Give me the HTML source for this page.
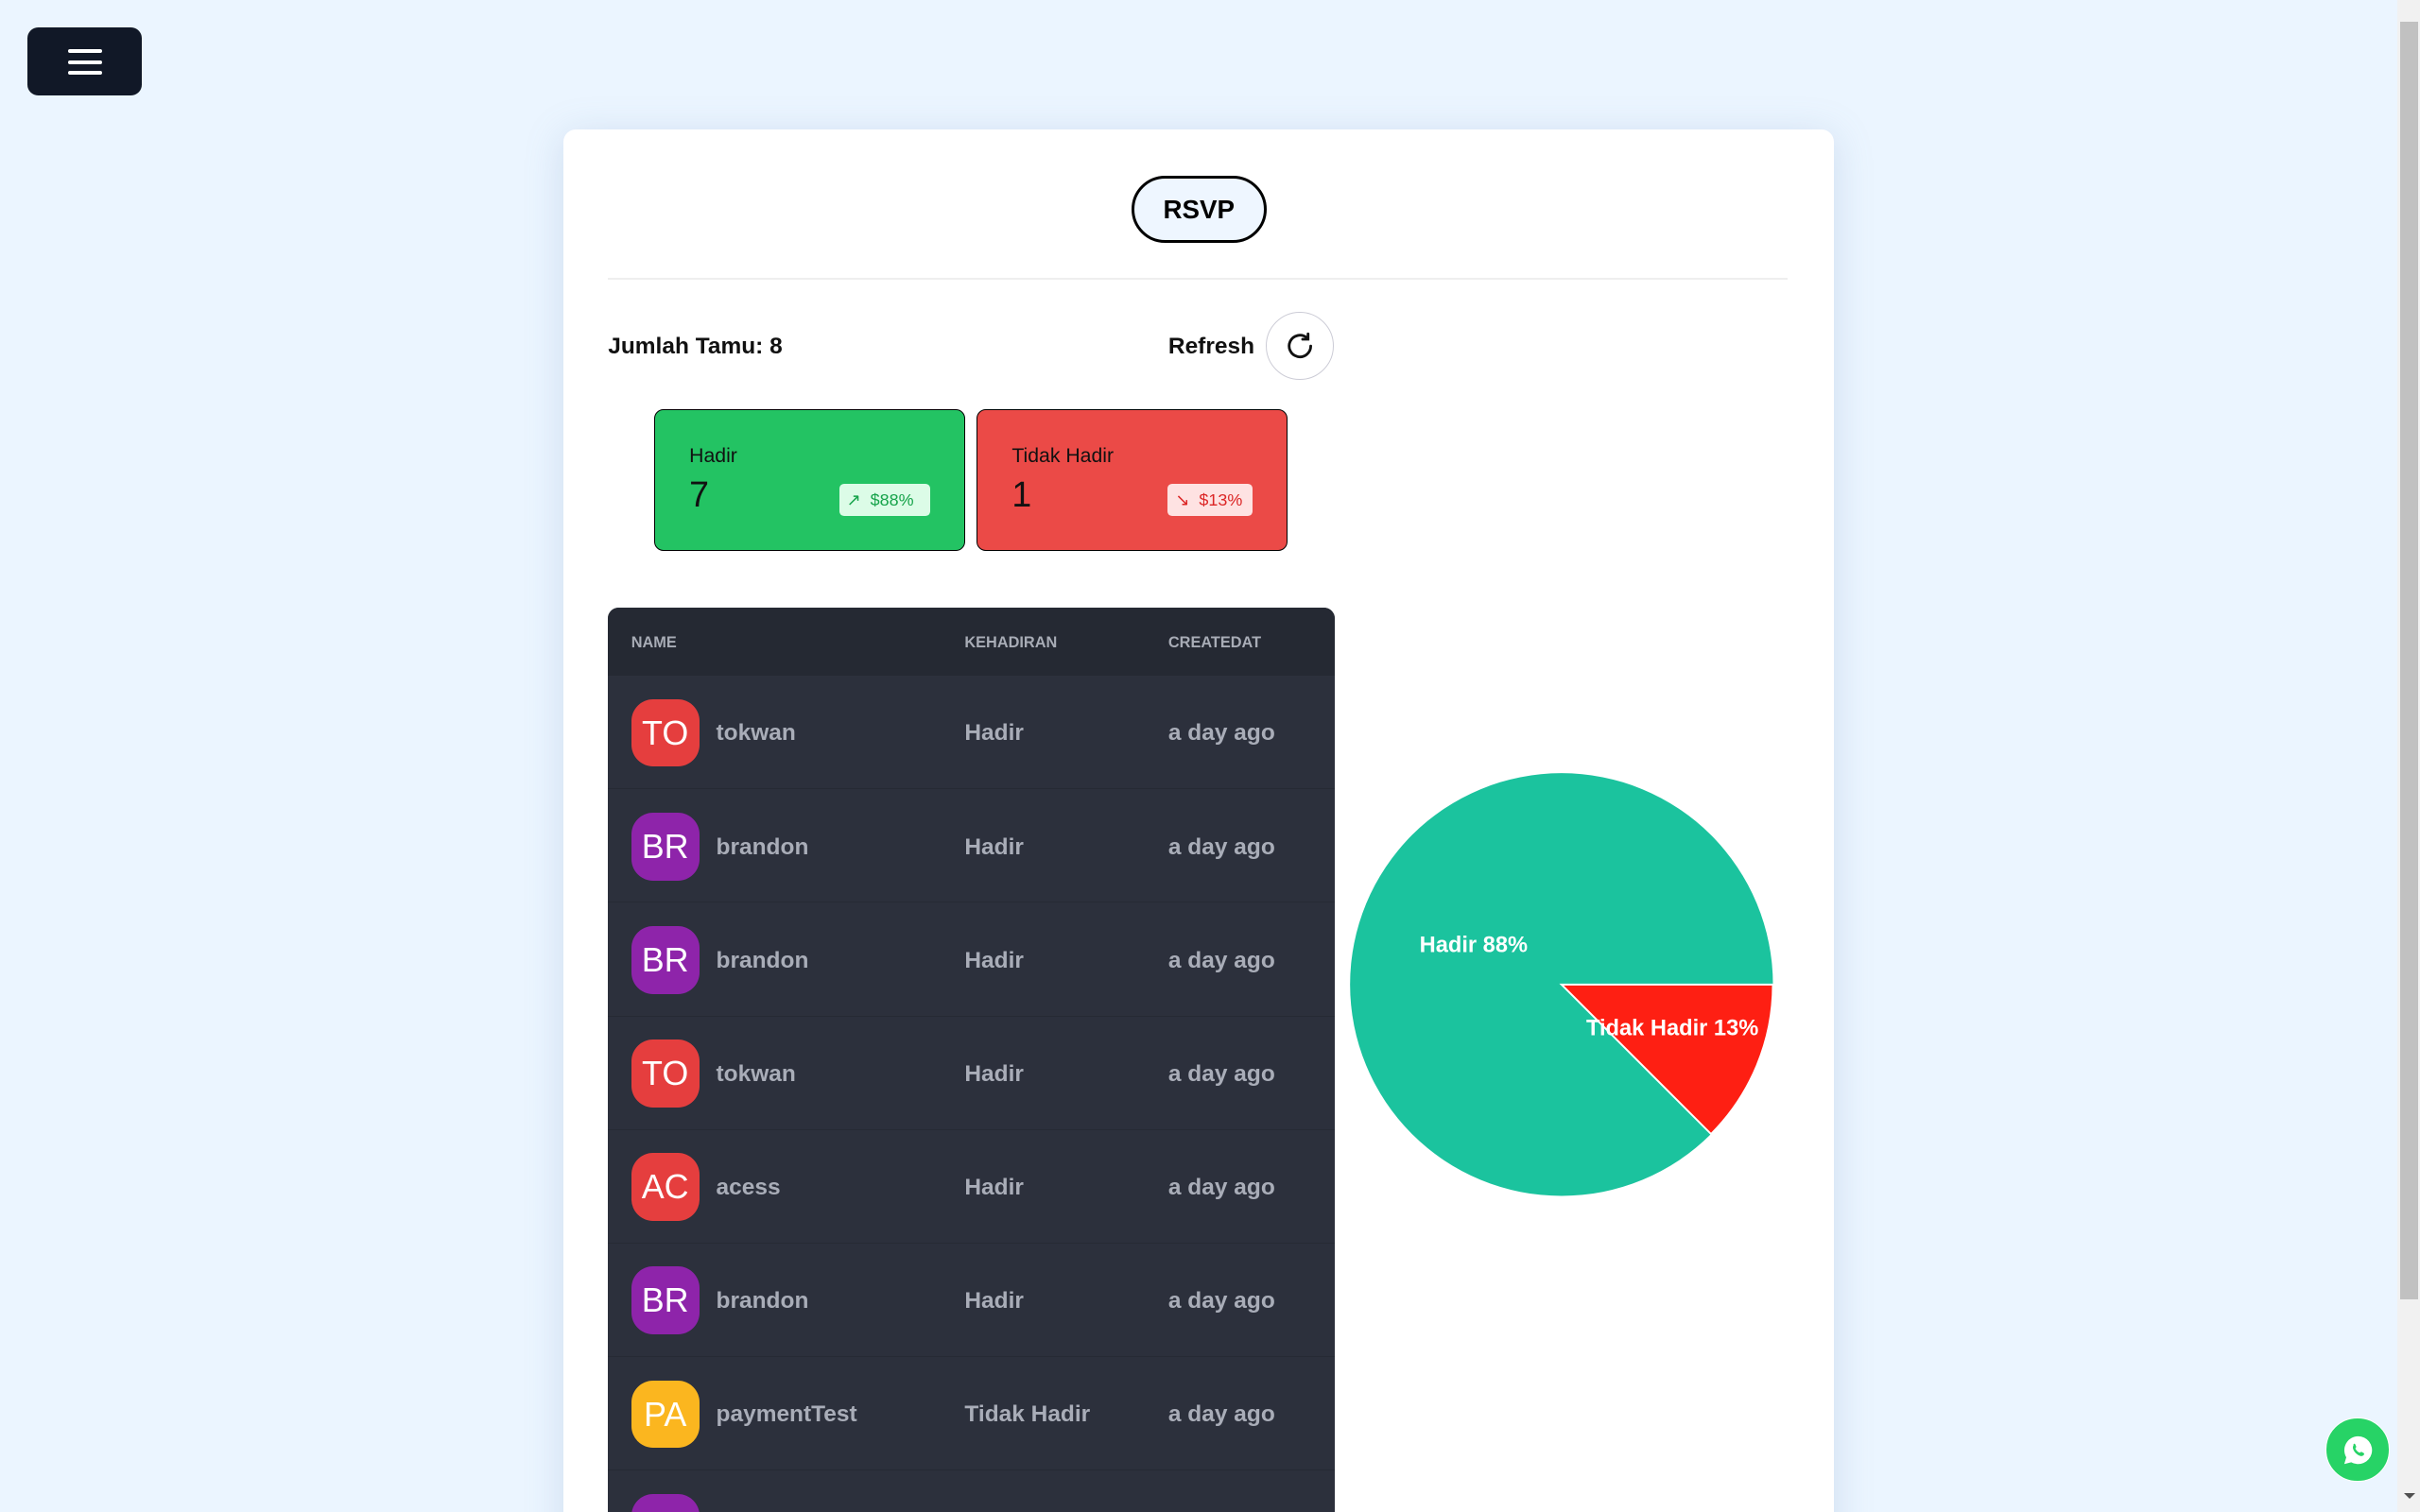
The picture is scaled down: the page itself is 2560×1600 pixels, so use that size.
<!DOCTYPE html>
<html><head><meta charset="utf-8"><style>
html,body{margin:0;padding:0;overflow:hidden}
body{width:2560px;height:1600px;background:#ebf5ff;font-family:"Liberation Sans",sans-serif;}
#z{zoom:1.63265;position:relative;width:1568px;height:980px;overflow:hidden}
.a{position:absolute}
.menu{left:18px;top:18px;width:74px;height:44px;background:#111827;border-radius:7px}
.menu i{position:absolute;left:26px;width:22px;height:2.6px;background:#fff;border-radius:2px}
.card{left:365px;top:84px;width:823px;height:920px;background:#fff;border-radius:8px;box-shadow:0 4px 24px rgba(120,150,190,.25)}
.rsvp{left:733px;top:114px;width:84px;height:40px;border:2px solid #000;border-radius:22px;background:#eef6ff;font-weight:bold;font-size:17px;text-align:center;line-height:40px}
.stat{top:265px;width:200px;height:91px;border:1px solid #000;border-radius:6px}
.stat .l{position:absolute;left:22px;top:23px;font-size:13px;color:#111}
.stat .n{position:absolute;left:22px;top:42px;font-size:23px;color:#111}
.badge{position:absolute;top:48px;height:21px;border-radius:3px;font-size:11px;line-height:21px;padding:0 5px}
.table{left:394px;top:394px;width:471px;height:600px;background:#2c303c;border-radius:7px 7px 0 0;overflow:hidden}
.th{height:44px;background:#252933;font-size:10px;font-weight:bold;color:#a8acb6;position:relative}
.th span,.row span{position:absolute}
.row{height:73px;border-bottom:1px solid #262a34;position:relative;font-size:15px;color:#a9adb8;font-weight:bold}
.av{position:absolute;left:15px;top:15px;width:44px;height:44px;border-radius:14px;color:#fff;font-size:22px;text-align:center;line-height:44px;font-weight:normal}
</style></head><body><div id="z">
<div class="a" style="right:0;top:0;width:15px;height:980px;background:#f1f1f1"></div>
<div class="a" style="right:1px;top:14px;width:12px;height:828px;background:#c1c1c1"></div>
<div class="a" style="right:3px;top:968px;width:0;height:0;border-left:4px solid transparent;border-right:4px solid transparent;border-top:4px solid #505050"></div>
<div class="a menu"><i style="top:14px"></i><i style="top:21px"></i><i style="top:28px"></i></div>
<div class="a card"></div>
<div class="a rsvp">RSVP</div>
<div class="a" style="left:394px;top:180px;width:764px;height:1px;background:#eee"></div>
<div class="a" style="left:394px;top:216px;font-size:15px;font-weight:bold;color:#111">Jumlah Tamu: 8</div>
<div class="a" style="left:757px;top:216px;font-size:15px;font-weight:bold;color:#111">Refresh</div>
<div class="a" style="left:820px;top:202px;width:43px;height:43px;border:1px solid #ccccd6;border-radius:50%"></div>
<svg class="a" style="left:832px;top:214px" width="21" height="21" viewBox="0 0 24 24" fill="none" stroke="#111" stroke-width="2" stroke-linecap="round"><path d="M20 12a8 8 0 1 1-3-6.2"/><path d="M18 3v4h-4"/></svg>
<div class="a stat" style="left:424px;background:#23c363"><div class="l">Hadir</div><div class="n">7</div><div class="badge" style="left:119px;width:49px;background:#dcfce7;color:#16a34a">↗&nbsp; $88%</div></div>
<div class="a stat" style="left:633px;background:#eb4a47"><div class="l">Tidak Hadir</div><div class="n">1</div><div class="badge" style="left:123px;width:45px;background:#fee2e2;color:#dc2626">↘&nbsp; $13%</div></div>
<div class="a table">
<div class="th"><span style="left:15px;top:17px">NAME</span><span style="left:231px;top:17px">KEHADIRAN</span><span style="left:363px;top:17px">CREATEDAT</span></div>
<div class="row"><div class="av" style="background:#e53e3e">TO</div><span style="left:70px;top:29px">tokwan</span><span style="left:231px;top:29px">Hadir</span><span style="left:363px;top:29px">a day ago</span></div>
<div class="row"><div class="av" style="background:#8e24aa">BR</div><span style="left:70px;top:29px">brandon</span><span style="left:231px;top:29px">Hadir</span><span style="left:363px;top:29px">a day ago</span></div>
<div class="row"><div class="av" style="background:#8e24aa">BR</div><span style="left:70px;top:29px">brandon</span><span style="left:231px;top:29px">Hadir</span><span style="left:363px;top:29px">a day ago</span></div>
<div class="row"><div class="av" style="background:#e53e3e">TO</div><span style="left:70px;top:29px">tokwan</span><span style="left:231px;top:29px">Hadir</span><span style="left:363px;top:29px">a day ago</span></div>
<div class="row"><div class="av" style="background:#e53e3e">AC</div><span style="left:70px;top:29px">acess</span><span style="left:231px;top:29px">Hadir</span><span style="left:363px;top:29px">a day ago</span></div>
<div class="row"><div class="av" style="background:#8e24aa">BR</div><span style="left:70px;top:29px">brandon</span><span style="left:231px;top:29px">Hadir</span><span style="left:363px;top:29px">a day ago</span></div>
<div class="row"><div class="av" style="background:#fbb61f">PA</div><span style="left:70px;top:29px">paymentTest</span><span style="left:231px;top:29px">Tidak Hadir</span><span style="left:363px;top:29px">a day ago</span></div>
<div class="row"><div class="av" style="background:#8e24aa">BR</div></div>
</div>
<svg class="a" style="left:870px;top:496px" width="284" height="284" viewBox="0 0 284 284">
<circle cx="142" cy="142" r="137" fill="#1bc39e"/>
<path d="M142 142 L279 142 A137 137 0 0 1 238.9 238.9 Z" fill="#fe1f13" stroke="#fff" stroke-width="1.2"/>
<text x="50" y="121" fill="#fff" font-family="Liberation Sans" font-size="14.5" font-weight="bold">Hadir 88%</text>
<text x="158" y="175" fill="#fff" font-family="Liberation Sans" font-size="14.5" font-weight="bold">Tidak Hadir 13%</text>
</svg>
<div class="a" style="left:1507px;top:919px;width:40px;height:40px;border-radius:50%;background:#27d366;border:1px solid #fff"></div>
<svg class="a" style="left:1516px;top:928px" width="24" height="24" viewBox="0 0 24 24"><path d="M12 3a9 9 0 0 0-7.7 13.6L3 21l4.5-1.2A9 9 0 1 0 12 3z" fill="#fff"/><path d="M9 8c.4-.3.9-.3 1.1.2l.6 1.4c.1.3 0 .6-.3.9-.3.3-.2.6 0 .9.6.9 1.3 1.6 2.2 2.1.3.2.6.2.8-.1.3-.3.6-.4.9-.2l1.3.7c.4.2.4.7.1 1.1-.6.7-1.5 1-2.4.7-2.1-.7-3.9-2.5-4.6-4.6-.3-.9 0-1.9.3-2.3z" fill="#27d366"/></svg>
</div></body></html>
